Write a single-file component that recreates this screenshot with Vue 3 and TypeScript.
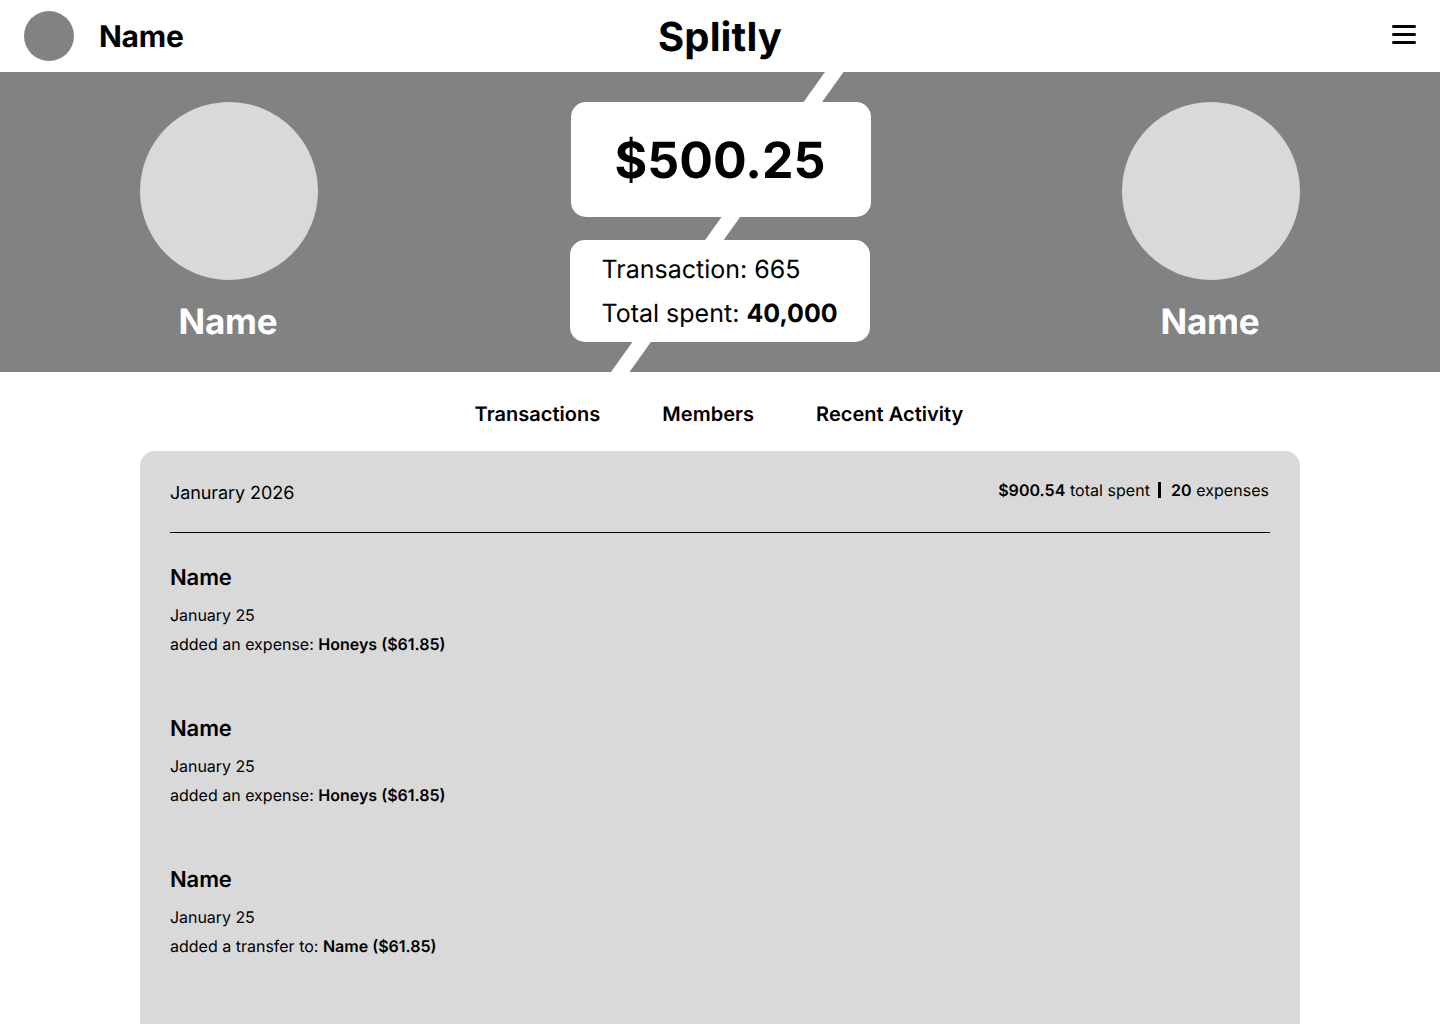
<script setup lang="ts">
const items = [
  { pre: 'added an expense: ', b: 'Honeys ($61.85)' },
  { pre: 'added an expense: ', b: 'Honeys ($61.85)' },
  { pre: 'added a transfer to: ', b: 'Name ($61.85)' },
]
</script>

<template>
  <div class="page">
    <header class="top">
      <div class="me"><span class="dot"></span><span class="me-name">Name</span></div>
      <div class="logo">Splitly</div>
      <div class="burger"><i></i><i></i><i></i></div>
    </header>
    <section class="hero">
      <svg class="slash" width="240" height="300" viewBox="0 0 240 300"><polygon points="214,0 232.5,0 18.5,300 0,300" fill="#fff" /></svg>
      <div class="person"><div class="big"></div><div class="pname">Name</div></div>
      <div class="mid">
        <div class="amount">$500.25</div>
        <div class="stats">
          <div>Transaction: 665</div>
          <div>Total spent: <b>40,000</b></div>
        </div>
      </div>
      <div class="person"><div class="big"></div><div class="pname">Name</div></div>
    </section>
    <nav class="tabs"><span>Transactions</span><span>Members</span><span>Recent Activity</span></nav>
    <main class="panel">
      <div class="head">
        <div class="month">Janurary 2026</div>
        <div class="sum"><b>$900.54</b> total spent<i class="sep"></i><b>20</b> expenses</div>
      </div>
      <div class="item" v-for="(it, i) in items" :key="i">
        <div class="iname">Name</div>
        <div class="date">January 25</div>
        <div class="desc">{{ it.pre }}<b>{{ it.b }}</b></div>
      </div>
    </main>
  </div>
</template>

<style>
html, body { margin: 0; background: #fff; }
</style>
<style scoped>
.page { width: 1440px; height: 1024px; overflow: hidden; font-family: Inter, sans-serif; color: #000; background: #fff; text-rendering: geometricPrecision; }
.top { height: 72px; display: flex; align-items: center; justify-content: space-between; padding: 0 24px; position: relative; box-sizing: border-box; }
.me { display: flex; align-items: center; gap: 25px; }
.dot { width: 50px; height: 50px; border-radius: 50%; background: #828282; }
.me-name { font-size: 30px; font-weight: 700; margin-top: 2px; letter-spacing: -0.25px; }
.logo { position: absolute; left: 0; right: 0; text-align: center; font-size: 40px; font-weight: 700; top: 13px; line-height: 48px; letter-spacing: 0.1px; box-sizing: border-box; }
.burger { display: flex; flex-direction: column; gap: 5px; width: 24px; margin-top: -3px; }
.burger i { display: block; height: 3px; border-radius: 1.5px; background: #000; }
.hero { height: 300px; background: #828282; position: relative; display: flex; justify-content: space-between; padding: 30px 140px 0; box-sizing: border-box; }
.slash { position: absolute; left: 611px; top: 0; }
.person { width: 178px; display: flex; flex-direction: column; align-items: center; position: relative; }
.big { width: 178px; height: 178px; border-radius: 50%; background: #d9d9d9; }
.pname { color: #fff; font-size: 35px; font-weight: 700; line-height: 42px; margin-top: 21px; padding-right: 2px; letter-spacing: -0.25px; }
.mid { display: flex; flex-direction: column; align-items: center; position: relative; gap: 23px; }
.amount { width: 300px; height: 115px; margin-left: 2px; padding: 2px 2px 0 0; background: #fff; border-radius: 15px; display: flex; align-items: center; justify-content: center; font-size: 50px; font-weight: 700; box-sizing: border-box; }
.stats { width: 300px; height: 102px; background: #fff; border-radius: 15px; padding: 2px 0 0 31.5px; box-sizing: border-box; font-size: 25px; display: flex; flex-direction: column; justify-content: center; gap: 14px; line-height: 30px; white-space: nowrap; }
.tabs { display: flex; justify-content: center; gap: 62px; height: 79px; align-items: center; font-size: 20px; font-weight: 600; padding: 4px 2px 0 0; box-sizing: border-box; letter-spacing: 0.03px; }
.panel { margin: 0 140px; background: #d9d9d9; border-radius: 15px; padding: 0 30px; height: 600px; }
.head { height: 82px; box-sizing: border-box; border-bottom: 1px solid #000; display: flex; justify-content: space-between; align-items: center; }
.month { font-size: 18px; margin-top: 4px; letter-spacing: -0.08px; }
.sum { font-size: 16px; margin: -4px 1px 0 0; display: flex; align-items: center; white-space: pre-wrap; letter-spacing: 0.04px; }
.sum b { font-weight: 600; }
.sep { width: 3px; height: 16px; background: #000; margin: 0 10px 0 8px; }
.item { height: 151px; padding-top: 32px; box-sizing: border-box; }
.iname { font-size: 22px; font-weight: 600; line-height: 27px; letter-spacing: -0.1px; }
.date, .desc { font-size: 16px; line-height: 19px; }
.date { margin-top: 14px; letter-spacing: -0.05px; }
.desc { margin-top: 10px; }
.desc b { font-weight: 600; }
</style>
